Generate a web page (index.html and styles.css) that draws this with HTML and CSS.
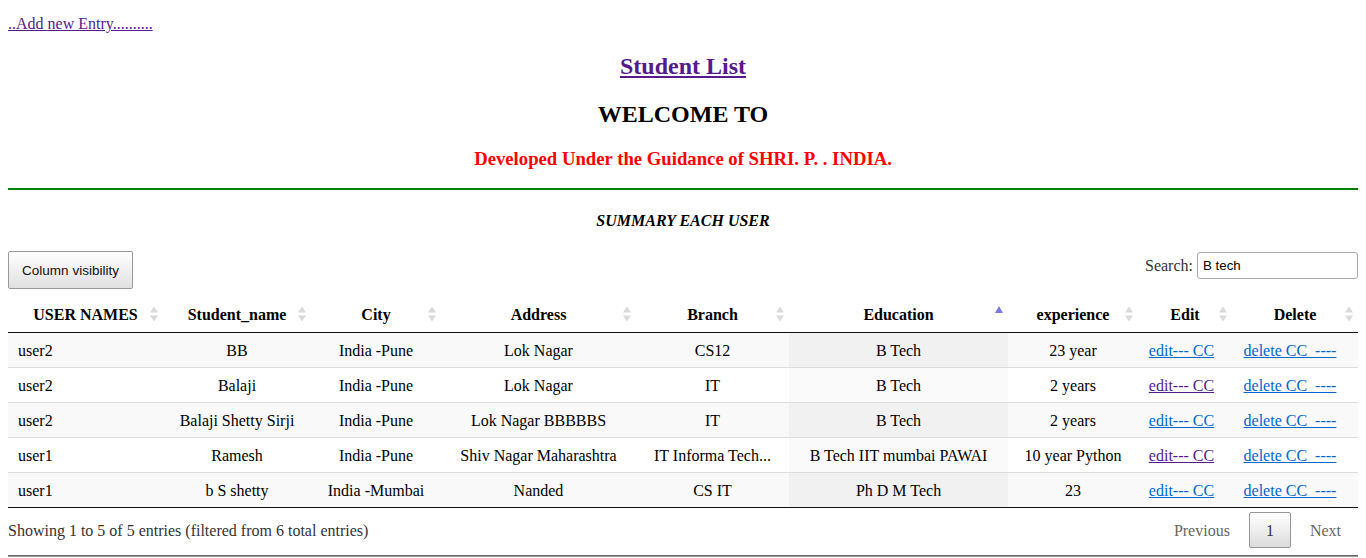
FILE: index.html
```html
<!DOCTYPE html>
<html>
<head>
<meta charset="utf-8">
<title>Student List</title>
<link rel="stylesheet" href="styles.css">
</head>
<body>
<div class="top"><a class="lnk visited" href="#">..Add new Entry..........</a></div>
<h2 class="title"><a class="lnk visited" href="#">Student List</a></h2>
<h2 class="welcome">WELCOME TO</h2>
<h3 class="guide">Developed Under the Guidance of SHRI. P. . INDIA.</h3>
<div class="rule"></div>
<h4 class="summary">SUMMARY EACH USER</h4>

<div class="controls">
  <button class="colvis">Column visibility</button>
  <label class="filter">Search:<input class="search" type="search" value="B tech"></label>
</div>

<table class="grid">
  <colgroup>
    <col class="w1"><col class="w2"><col class="w3"><col class="w4"><col class="w5"><col class="w6"><col class="w7"><col class="w8"><col class="w9">
  </colgroup>
  <thead>
    <tr>
      <th>USER NAMES<svg class="sort" viewBox="0 0 8 16"><path class="tri" d="M0 6.5 L4 0.5 L8 6.5 Z"/><path class="tri" d="M0 9.5 L4 15.5 L8 9.5 Z"/></svg></th>
      <th>Student_name<svg class="sort" viewBox="0 0 8 16"><path class="tri" d="M0 6.5 L4 0.5 L8 6.5 Z"/><path class="tri" d="M0 9.5 L4 15.5 L8 9.5 Z"/></svg></th>
      <th>City<svg class="sort" viewBox="0 0 8 16"><path class="tri" d="M0 6.5 L4 0.5 L8 6.5 Z"/><path class="tri" d="M0 9.5 L4 15.5 L8 9.5 Z"/></svg></th>
      <th>Address<svg class="sort" viewBox="0 0 8 16"><path class="tri" d="M0 6.5 L4 0.5 L8 6.5 Z"/><path class="tri" d="M0 9.5 L4 15.5 L8 9.5 Z"/></svg></th>
      <th>Branch<svg class="sort" viewBox="0 0 8 16"><path class="tri" d="M0 6.5 L4 0.5 L8 6.5 Z"/><path class="tri" d="M0 9.5 L4 15.5 L8 9.5 Z"/></svg></th>
      <th>Education<svg class="sort" viewBox="0 0 8 16"><path class="asc" d="M0 7 L4 0 L8 7 Z"/></svg></th>
      <th>experience<svg class="sort" viewBox="0 0 8 16"><path class="tri" d="M0 6.5 L4 0.5 L8 6.5 Z"/><path class="tri" d="M0 9.5 L4 15.5 L8 9.5 Z"/></svg></th>
      <th>Edit<svg class="sort" viewBox="0 0 8 16"><path class="tri" d="M0 6.5 L4 0.5 L8 6.5 Z"/><path class="tri" d="M0 9.5 L4 15.5 L8 9.5 Z"/></svg></th>
      <th>Delete<svg class="sort" viewBox="0 0 8 16"><path class="tri" d="M0 6.5 L4 0.5 L8 6.5 Z"/><path class="tri" d="M0 9.5 L4 15.5 L8 9.5 Z"/></svg></th>
    </tr>
  </thead>
  <tbody>
    <tr class="odd">
      <td class="left">user2</td><td>BB</td><td>India -Pune</td><td>Lok Nagar</td><td>CS12</td><td class="sorted">B Tech</td><td>23 year</td>
      <td class="edit"><a class="lnk" href="#">edit--- CC</a></td><td class="del"><a class="lnk" href="#">delete CC&nbsp; ----</a></td>
    </tr>
    <tr class="even">
      <td class="left">user2</td><td>Balaji</td><td>India -Pune</td><td>Lok Nagar</td><td>IT</td><td class="sorted">B Tech</td><td>2 years</td>
      <td class="edit"><a class="lnk visited" href="#">edit--- CC</a></td><td class="del"><a class="lnk" href="#">delete CC&nbsp; ----</a></td>
    </tr>
    <tr class="odd">
      <td class="left">user2</td><td>Balaji Shetty Sirji</td><td>India -Pune</td><td>Lok Nagar BBBBBS</td><td>IT</td><td class="sorted">B Tech</td><td>2 years</td>
      <td class="edit"><a class="lnk" href="#">edit--- CC</a></td><td class="del"><a class="lnk" href="#">delete CC&nbsp; ----</a></td>
    </tr>
    <tr class="even">
      <td class="left">user1</td><td>Ramesh</td><td>India -Pune</td><td>Shiv Nagar Maharashtra</td><td>IT Informa Tech...</td><td class="sorted">B Tech IIT mumbai PAWAI</td><td>10 year Python</td>
      <td class="edit"><a class="lnk visited" href="#">edit--- CC</a></td><td class="del"><a class="lnk" href="#">delete CC&nbsp; ----</a></td>
    </tr>
    <tr class="odd">
      <td class="left">user1</td><td>b S shetty</td><td>India -Mumbai</td><td>Nanded</td><td>CS IT</td><td class="sorted">Ph D M Tech</td><td>23</td>
      <td class="edit"><a class="lnk" href="#">edit--- CC</a></td><td class="del"><a class="lnk" href="#">delete CC&nbsp; ----</a></td>
    </tr>
  </tbody>
</table>

<div class="footer">
  <div class="info">Showing 1 to 5 of 5 entries (filtered from 6 total entries)</div>
  <div class="paginate">
    <span class="pbtn">Previous</span><span class="pbtn current">1</span><span class="pbtn">Next</span>
  </div>
</div>
<div class="endrule"></div>
</body>
</html>
```

FILE: styles.css
```css
html, body {
  background: #fff;
}

body {
  margin: 0;
  padding: 0 8px;
  font-family: "Liberation Serif", "Times New Roman", serif;
  font-size: 16px;
  line-height: 18px;
  color: #000;
}

.lnk {
  color: #0066cc;
  text-decoration: underline;
}

.lnk.visited {
  color: #551a8b;
}

.top {
  padding-top: 15px;
}

.title,
.welcome {
  margin: 0;
  font-size: 24px;
  line-height: 28px;
  font-weight: bold;
  text-align: center;
}

.title {
  margin-top: 19px;
}

.welcome {
  margin-top: 20px;
}

.guide {
  margin: 20px 0 0;
  font-size: 18.72px;
  line-height: 22px;
  font-weight: bold;
  color: #ff0000;
  text-align: center;
}

.rule {
  margin-top: 18px;
  height: 0;
  border-top: 2px solid #008000;
}

.summary {
  margin: 22px 0 0;
  font-size: 16px;
  line-height: 18px;
  font-weight: bold;
  font-style: italic;
  text-align: center;
}

.controls {
  margin-top: 21px;
  margin-bottom: 7px;
  display: flex;
  justify-content: space-between;
  align-items: flex-start;
}

.colvis {
  box-sizing: border-box;
  width: 125px;
  height: 38px;
  padding: 0;
  border: 1px solid #999;
  border-radius: 2px;
  background: linear-gradient(to bottom, #ffffff 0%, #e0e0e0 100%);
  font-family: "Liberation Sans", Arial, sans-serif;
  font-size: 13.5px;
  color: #111;
}

.filter {
  display: flex;
  align-items: center;
  padding-top: 1px;
  color: #333;
}

.search {
  box-sizing: border-box;
  width: 161px;
  height: 27px;
  margin: 0 0 0 4px;
  padding: 3px 5px;
  border: 1px solid #aaa;
  border-radius: 3px;
  background: #fff;
  font-family: "Liberation Sans", Arial, sans-serif;
  font-size: 13.3px;
  color: #000;
  outline: none;
}

.grid {
  width: 100%;
  table-layout: fixed;
  border-collapse: separate;
  border-spacing: 0;
  border-bottom: 1px solid #111;
}

.w1 { width: 155px; }
.w2 { width: 148px; }
.w3 { width: 130px; }
.w4 { width: 195px; }
.w5 { width: 153px; }
.w6 { width: 219px; }
.w7 { width: 130px; }
.w8 { width: 94px; }
.w9 { width: 126px; }

.grid th {
  position: relative;
  padding: 10px 18px 8px;
  line-height: 18px;
  font-weight: bold;
  text-align: center;
  white-space: nowrap;
  border-bottom: 1px solid #111;
}

.sort {
  position: absolute;
  right: 5px;
  top: 10px;
  width: 8px;
  height: 16px;
}

.tri {
  fill: #dadada;
}

.asc {
  fill: #7a7ae0;
}

.grid td {
  padding: 9px 10px 7px;
  line-height: 18px;
  text-align: center;
  white-space: nowrap;
  overflow: hidden;
  border-top: 1px solid #ddd;
}

.grid tbody tr:first-child td {
  border-top: 0;
}

.grid td.left {
  text-align: left;
}

.grid td.edit {
  padding-right: 17px;
}

.grid td.del {
  padding-right: 20px;
}

.odd {
  background: #f9f9f9;
}

.even {
  background: #fff;
}

.odd td.sorted {
  background: #f1f1f1;
}

.even td.sorted {
  background: #fafafa;
}

.footer {
  display: flex;
  justify-content: space-between;
  align-items: flex-start;
}

.info {
  padding-top: 14px;
  color: #333;
}

.paginate {
  padding-top: 4px;
  display: flex;
}

.pbtn {
  display: block;
  padding: 9px 16px 7px;
  margin-left: 2px;
  border: 1px solid transparent;
  border-radius: 2px;
  line-height: 18px;
  color: #666;
}

.pbtn.current {
  border-color: #979797;
  background: linear-gradient(to bottom, #ffffff 0%, #dcdcdc 100%);
  color: #333;
}

.endrule {
  margin-top: 7px;
  border-top: 1px solid #6a6a6a;
  border-bottom: 1px solid #9a9a9a;
}
```
